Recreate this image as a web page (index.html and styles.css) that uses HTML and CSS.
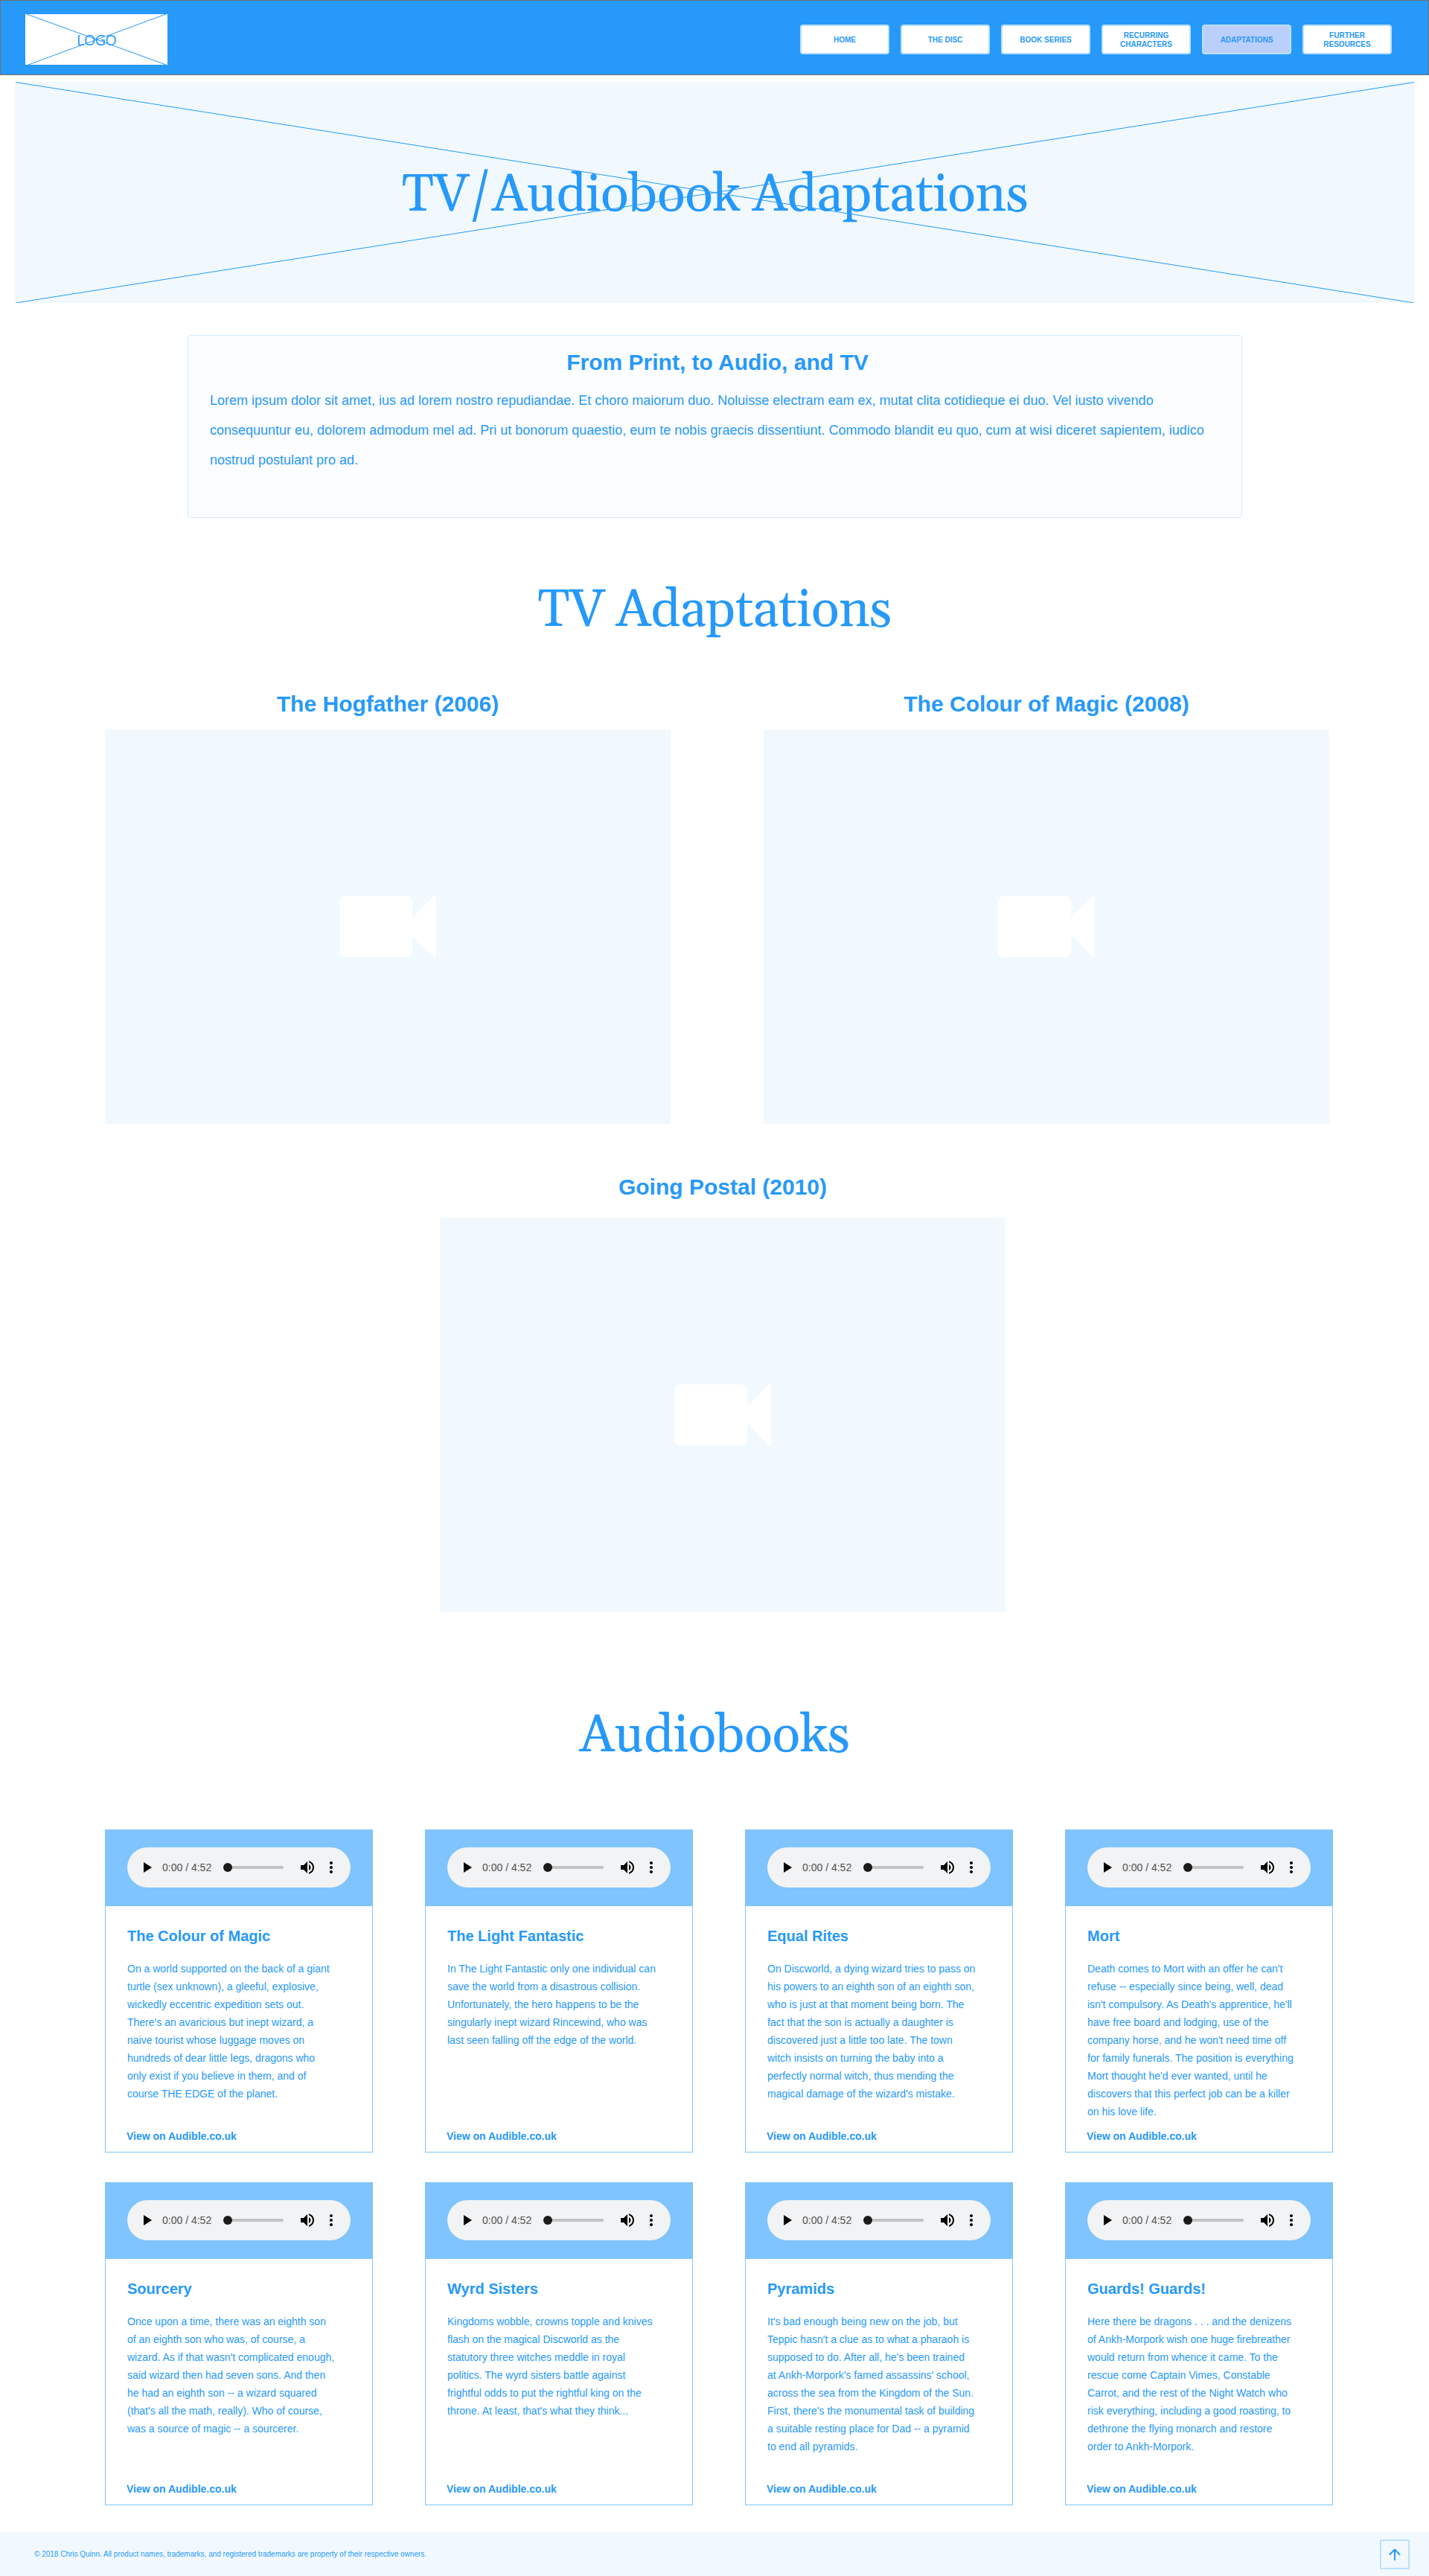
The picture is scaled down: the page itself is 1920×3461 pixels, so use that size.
FILE: index.html
```html
<!DOCTYPE html>
<html lang="en">
<head>
<meta charset="utf-8">
<title>TV/Audiobook Adaptations</title>
<link rel="stylesheet" href="styles.css">
</head>
<body>
<svg class="sprite" width="0" height="0" aria-hidden="true">
  <symbol id="camera" viewBox="0 0 130 82"><path d="M8 0H90A8 8 0 0 1 98 8V29L126 1Q130 -2 130 3V79Q130 84 126 81L98 53V74A8 8 0 0 1 90 82H8A8 8 0 0 1 0 74V8A8 8 0 0 1 8 0Z" fill="#fff"/></symbol>
  <symbol id="play" viewBox="0 0 24 24"><path d="M8 5v14l11-7z"/></symbol>
  <symbol id="volume" viewBox="0 0 24 24"><path d="M3 9v6h4l5 5V4L7 9H3zm13.500 3c0-1.770-1.020-3.290-2.500-4.030v8.050c1.480-.730 2.500-2.250 2.500-4.020zM14 3.230v2.060c2.890.860 5 3.540 5 6.710s-2.110 5.850-5 6.710v2.060c4.010-.910 7-4.490 7-8.770s-2.990-7.860-7-8.770z"/></symbol>
  <symbol id="more" viewBox="0 0 24 24"><path d="M12 8c1.100 0 2-.900 2-2s-.900-2-2-2-2 .900-2 2 .900 2 2 2zm0 2c-1.100 0-2 .900-2 2s.900 2 2 2 2-.900 2-2-.900-2-2-2zm0 6c-1.100 0-2 .900-2 2s.900 2 2 2 2-.900 2-2-.900-2-2-2z"/></symbol>
  <symbol id="player" viewBox="0 0 300 54">
    <use href="#play" x="14" y="15" width="24" height="24"/>
    <rect x="134" y="25" width="76" height="4" rx="2" fill="#c1c3c4"/>
    <circle cx="135" cy="27" r="6" fill="#1a1a1a"/>
    <use href="#volume" x="230" y="15" width="24" height="24"/>
    <use href="#more" x="262" y="15" width="24" height="24"/>
  </symbol>
</svg>

<header class="topbar">
  <div class="logo">
    <svg class="cross" viewBox="0 0 191 68" preserveAspectRatio="none"><path d="M2 0L189 68M189 0L4 68" stroke="#2699fb" fill="none"/></svg>
    <span class="logo-text">LOGO</span>
  </div>
  <nav class="nav">
    <a class="nav-item">HOME</a>
    <a class="nav-item">THE DISC</a>
    <a class="nav-item">BOOK SERIES</a>
    <a class="nav-item">RECURRING<br>CHARACTERS</a>
    <a class="nav-item active">ADAPTATIONS</a>
    <a class="nav-item">FURTHER<br>RESOURCES</a>
  </nav>
</header>

<section class="hero">
  <svg class="cross" viewBox="0 0 1881 297" preserveAspectRatio="none"><path d="M1 .5L1880 297M1880 .5L1 297" stroke="#2699fb" fill="none"/></svg>
  <h1 class="display">TV/Audiobook Adaptations</h1>
</section>

<section class="intro">
  <h2 class="heading">From Print, to Audio, and TV</h2>
  <p class="intro-text">Lorem ipsum dolor sit amet, ius ad lorem nostro repudiandae. Et choro maiorum duo. Noluisse electram eam ex, mutat clita cotidieque ei duo. Vel iusto vivendo<br>consequuntur eu, dolorem admodum mel ad. Pri ut bonorum quaestio, eum te nobis graecis dissentiunt. Commodo blandit eu quo, cum at wisi diceret sapientem, iudico<br>nostrud postulant pro ad.</p>
</section>

<h1 class="display tv-title">TV Adaptations</h1>
<section class="videos">
  <article class="video"><h2 class="heading">The Hogfather (2006)</h2><div class="frame"><svg width="130" height="82"><use href="#camera"/></svg></div></article>
  <article class="video"><h2 class="heading">The Colour of Magic (2008)</h2><div class="frame"><svg width="130" height="82"><use href="#camera"/></svg></div></article>
</section>
<section class="videos single">
  <article class="video"><h2 class="heading">Going Postal (2010)</h2><div class="frame"><svg width="130" height="82"><use href="#camera"/></svg></div></article>
</section>

<h1 class="display audio-title">Audiobooks</h1>
<section class="books">
  <article class="card">
    <div class="card-head"><div class="player"><svg class="player-ui" width="300" height="54"><use href="#player"/></svg><span class="time">0:00 / 4:52</span></div></div>
    <div class="card-body"><h3 class="card-title">The Colour of Magic</h3>
    <p class="blurb">On a world supported on the back of a giant<br>turtle (sex unknown), a gleeful, explosive,<br>wickedly eccentric expedition sets out.<br>There's an avaricious but inept wizard, a<br>naive tourist whose luggage moves on<br>hundreds of dear little legs, dragons who<br>only exist if you believe in them, and of<br>course THE EDGE of the planet.</p>
    <a class="link">View on Audible.co.uk</a></div>
  </article>
  <article class="card">
    <div class="card-head"><div class="player"><svg class="player-ui" width="300" height="54"><use href="#player"/></svg><span class="time">0:00 / 4:52</span></div></div>
    <div class="card-body"><h3 class="card-title">The Light Fantastic</h3>
    <p class="blurb">In The Light Fantastic only one individual can<br>save the world from a disastrous collision.<br>Unfortunately, the hero happens to be the<br>singularly inept wizard Rincewind, who was<br>last seen falling off the edge of the world.</p>
    <a class="link">View on Audible.co.uk</a></div>
  </article>
  <article class="card">
    <div class="card-head"><div class="player"><svg class="player-ui" width="300" height="54"><use href="#player"/></svg><span class="time">0:00 / 4:52</span></div></div>
    <div class="card-body"><h3 class="card-title">Equal Rites</h3>
    <p class="blurb">On Discworld, a dying wizard tries to pass on<br>his powers to an eighth son of an eighth son,<br>who is just at that moment being born. The<br>fact that the son is actually a daughter is<br>discovered just a little too late. The town<br>witch insists on turning the baby into a<br>perfectly normal witch, thus mending the<br>magical damage of the wizard's mistake.</p>
    <a class="link">View on Audible.co.uk</a></div>
  </article>
  <article class="card">
    <div class="card-head"><div class="player"><svg class="player-ui" width="300" height="54"><use href="#player"/></svg><span class="time">0:00 / 4:52</span></div></div>
    <div class="card-body"><h3 class="card-title">Mort</h3>
    <p class="blurb">Death comes to Mort with an offer he can't<br>refuse -- especially since being, well, dead<br>isn't compulsory. As Death's apprentice, he'll<br>have free board and lodging, use of the<br>company horse, and he won't need time off<br>for family funerals. The position is everything<br>Mort thought he'd ever wanted, until he<br>discovers that this perfect job can be a killer<br>on his love life.</p>
    <a class="link">View on Audible.co.uk</a></div>
  </article>
  <article class="card">
    <div class="card-head"><div class="player"><svg class="player-ui" width="300" height="54"><use href="#player"/></svg><span class="time">0:00 / 4:52</span></div></div>
    <div class="card-body"><h3 class="card-title">Sourcery</h3>
    <p class="blurb">Once upon a time, there was an eighth son<br>of an eighth son who was, of course, a<br>wizard. As if that wasn't complicated enough,<br>said wizard then had seven sons. And then<br>he had an eighth son -- a wizard squared<br>(that's all the math, really). Who of course,<br>was a source of magic -- a sourcerer.</p>
    <a class="link">View on Audible.co.uk</a></div>
  </article>
  <article class="card">
    <div class="card-head"><div class="player"><svg class="player-ui" width="300" height="54"><use href="#player"/></svg><span class="time">0:00 / 4:52</span></div></div>
    <div class="card-body"><h3 class="card-title">Wyrd Sisters</h3>
    <p class="blurb">Kingdoms wobble, crowns topple and knives<br>flash on the magical Discworld as the<br>statutory three witches meddle in royal<br>politics. The wyrd sisters battle against<br>frightful odds to put the rightful king on the<br>throne. At least, that's what they think...</p>
    <a class="link">View on Audible.co.uk</a></div>
  </article>
  <article class="card">
    <div class="card-head"><div class="player"><svg class="player-ui" width="300" height="54"><use href="#player"/></svg><span class="time">0:00 / 4:52</span></div></div>
    <div class="card-body"><h3 class="card-title">Pyramids</h3>
    <p class="blurb">It's bad enough being new on the job, but<br>Teppic hasn't a clue as to what a pharaoh is<br>supposed to do. After all, he's been trained<br>at Ankh-Morpork's famed assassins' school,<br>across the sea from the Kingdom of the Sun.<br>First, there's the monumental task of building<br>a suitable resting place for Dad -- a pyramid<br>to end all pyramids.</p>
    <a class="link">View on Audible.co.uk</a></div>
  </article>
  <article class="card">
    <div class="card-head"><div class="player"><svg class="player-ui" width="300" height="54"><use href="#player"/></svg><span class="time">0:00 / 4:52</span></div></div>
    <div class="card-body"><h3 class="card-title">Guards! Guards!</h3>
    <p class="blurb">Here there be dragons . . . and the denizens<br>of Ankh-Morpork wish one huge firebreather<br>would return from whence it came. To the<br>rescue come Captain Vimes, Constable<br>Carrot, and the rest of the Night Watch who<br>risk everything, including a good roasting, to<br>dethrone the flying monarch and restore<br>order to Ankh-Morpork.</p>
    <a class="link">View on Audible.co.uk</a></div>
  </article>
</section>

<footer class="footer">
  <p class="legal">© 2018 Chris Quinn. All product names, trademarks, and registered trademarks are property of their respective owners.</p>
  <a class="to-top"><svg width="16" height="16" viewBox="0 0 16 16"><path d="M8 16V1.500M1 8.500L8 1.500L15 8.500" fill="none" stroke="#2699fb" stroke-width="2"/></svg></a>
</footer>
</body>
</html>
```
FILE: styles.css
```css
* { box-sizing: border-box; margin: 0; padding: 0; }
body {
  background: #fff;
  color: #2699fb;
  font-family: "Liberation Sans", Arial, sans-serif;
  width: 1920px;
}
svg { display: block; flex: none; }
.sprite { position: absolute; }

.topbar {
  height: 101px;
  background: #2699fb;
  border: 1px solid #707070;
  padding: 0 49px 0 33px;
  display: flex;
  justify-content: space-between;
  align-items: flex-start;
}
.logo {
  position: relative;
  margin-top: 18px;
  width: 191px;
  height: 68px;
  background: #fff;
  display: flex;
  justify-content: center;
  align-items: center;
}
.cross { position: absolute; left: 0; top: 0; width: 100%; height: 100%; }
.logo-text {
  font-family: "Open Sans", sans-serif;
  font-weight: 400;
  font-size: 20px;
  line-height: 28px;
  letter-spacing: -0.8px;
  padding-top: 2px;
  position: relative;
}
.nav { display: flex; gap: 15px; margin-top: 32px; }
.nav-item {
  width: 120px;
  height: 40px;
  background: #fff;
  border: 2px solid #bce0fd;
  border-radius: 4px;
  display: flex;
  align-items: center;
  justify-content: center;
  text-align: center;
  padding-top: 2px;
  font-size: 10px;
  line-height: 12px;
  font-weight: bold;
}
.nav-item.active { background: #bbcffc; }

.hero {
  position: relative;
  margin: 9px 19px 0 20px;
  height: 297px;
  background: #f1f9ff;
}
.display {
  font-family: Georgia, Gelasio, "Liberation Serif", serif;
  font-weight: normal;
  font-size: 70px;
  line-height: 80px;
  letter-spacing: -0.5px;
  text-align: center;
  white-space: nowrap;
}
.hero .display { position: relative; padding-top: 113px; }

.intro {
  margin: 43px auto 0 252px;
  width: 1417px;
  height: 246px;
  background: #fcfdff;
  border: 1px solid #d0e9fe;
  border-radius: 5px;
  padding: 19px 29px 0;
}
.heading { font-size: 30px; line-height: 34px; text-align: center; white-space: nowrap; }
.intro .heading { padding-left: 7px; }
.intro-text { font-size: 18px; line-height: 40px; margin-top: 14px; white-space: nowrap; }

.tv-title { margin-top: 85px; }
.videos { display: flex; gap: 125px; padding-left: 141px; margin-top: 68px; }
.video { width: 760px; }
.frame {
  height: 530px;
  margin-top: 17px;
  background: #f1f9ff;
  display: flex;
  align-items: center;
  justify-content: center;
}
.single { padding-left: 591px; margin-top: 68px; }
.single .frame { margin-top: 24px; }

.audio-title { margin-top: 127px; }
.books {
  display: grid;
  grid-template-columns: repeat(4, 360px);
  column-gap: 70px;
  row-gap: 40px;
  padding-left: 141px;
  margin-top: 85px;
}
.card { height: 434px; border: 1px solid #7fc4fd; }
.card-head { height: 102px; background: #7fc4fd; padding: 23px 29px 0; }
.player {
  position: relative;
  width: 300px;
  height: 54px;
  border-radius: 27px;
  background: #f1f3f4;
  display: flex;
  align-items: center;
}
.player-ui { position: absolute; left: 0; top: 0; }
.time { position: relative; padding-left: 47px; font-size: 14px; line-height: 16px; color: #505152; }
.card-body { height: 330px; padding: 28px 0 0 29px; display: flex; flex-direction: column; white-space: nowrap; }
.card-title { font-size: 20px; line-height: 24px; }
.blurb { font-size: 14px; line-height: 24px; margin-top: 20px; }
.link { font-size: 14px; line-height: 16px; font-weight: bold; margin: auto 0 13px -1px; }

.footer {
  margin-top: 36px;
  height: 59px;
  background: #f1f9ff;
  padding: 0 26px 0 46px;
  display: flex;
  justify-content: space-between;
  align-items: flex-start;
}
.legal { font-size: 10px; line-height: 12px; margin-top: 24px; }
.to-top {
  width: 40px;
  height: 40px;
  margin-top: 10px;
  border: 2px solid #bce0fd;
  display: flex;
  align-items: center;
  justify-content: center;
}
```
